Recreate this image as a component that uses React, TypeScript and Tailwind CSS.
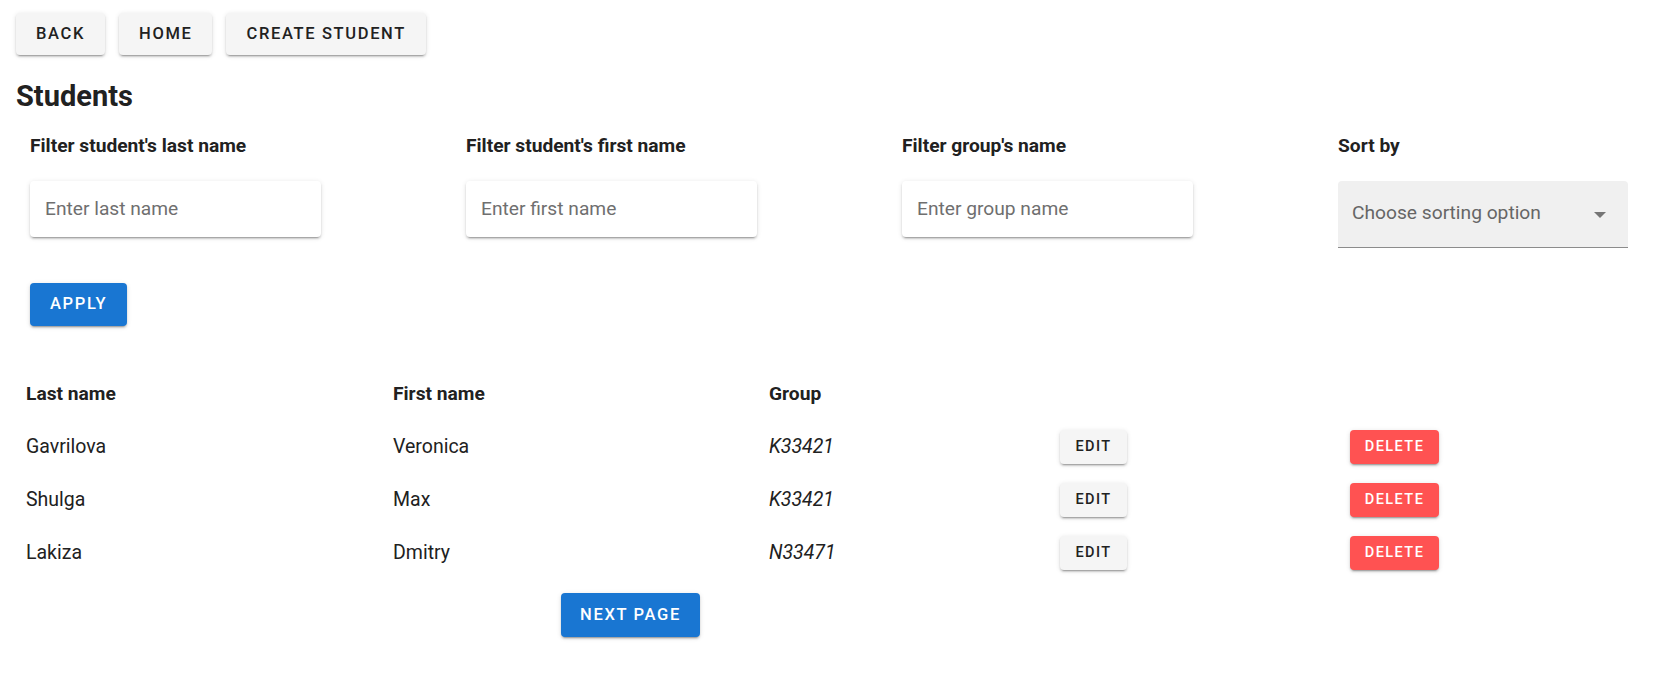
import React from "react";

const shadow =
  "shadow-[0px_3px_1px_-2px_rgba(0,0,0,0.2),0px_2px_2px_0px_rgba(0,0,0,0.14),0px_1px_5px_0px_rgba(0,0,0,0.12)]";

function GreyButton({ children }: { children: React.ReactNode }) {
  return (
    <button
      className={`h-[42px] px-[20px] rounded-[4px] bg-[#f5f5f5] text-[#212121] text-[16.5px] font-medium tracking-[0.1em] uppercase ${shadow}`}
    >
      {children}
    </button>
  );
}

function Field({ label, placeholder }: { label: string; placeholder: string }) {
  return (
    <div className="flex flex-col">
      <div className="text-[19.2px] font-bold text-[#212121] leading-[24px] h-[24px]">{label}</div>
      <div
        className={`mt-[23px] w-[291px] h-[56px] rounded-[4px] bg-white flex items-center px-[15px] text-[19.2px] text-[#6f6f6f] ${shadow}`}
      >
        {placeholder}
      </div>
    </div>
  );
}

const rows = [
  { last: "Gavrilova", first: "Veronica", group: "K33421" },
  { last: "Shulga", first: "Max", group: "K33421" },
  { last: "Lakiza", first: "Dmitry", group: "N33471" },
];

export default function App() {
  return (
    <div
      className="w-[1676px] h-[674px] bg-white text-[#212121] px-[16px] pt-[13px]"
      style={{ fontFamily: "Roboto, 'Liberation Sans', sans-serif" }}
    >
      <div className="flex gap-[14px]">
        <GreyButton>Back</GreyButton>
        <GreyButton>Home</GreyButton>
        <GreyButton>Create student</GreyButton>
      </div>

      <h1 className="mt-[24px] text-[29px] font-bold leading-[34px]">Students</h1>

      <div className="ml-[14px] mt-[21px] grid grid-cols-[436px_436px_436px_1fr]">
        <Field label="Filter student's last name" placeholder="Enter last name" />
        <Field label="Filter student's first name" placeholder="Enter first name" />
        <Field label="Filter group's name" placeholder="Enter group name" />
        <div className="flex flex-col">
          <div className="text-[19.2px] font-bold leading-[24px] h-[24px]">Sort by</div>
          <div className="mt-[23px] w-[290px] h-[67px] rounded-t-[4px] bg-[#f0f0f0] border-b border-[#8c8c8c] flex items-center pl-[14px] pr-[22px] text-[19.2px] text-[#666666]">
            <span className="flex-1 -mt-[1px]">Choose sorting option</span>
            <svg width="12" height="6" viewBox="0 0 10 5" className="mt-[1px]">
              <path d="M0 0 L5 5 L10 0 Z" fill="#757575" />
            </svg>
          </div>
        </div>

        <div className="mt-[35px] col-span-4">
          <button
            className={`h-[43px] px-[20px] rounded-[4px] bg-[#1976d2] text-white text-[16.5px] font-medium tracking-[0.1em] ${shadow}`}
          >
            APPLY
          </button>
        </div>
      </div>

      <div className="ml-[10px] mt-[43px] grid grid-cols-[367px_376px_291px_290px_auto] text-[19.5px]">
        <div className="h-[51px] flex items-center font-bold text-[19.2px]">Last name</div>
        <div className="h-[51px] flex items-center font-bold text-[19.2px]">First name</div>
        <div className="h-[51px] flex items-center font-bold text-[19.2px]">Group</div>
        <div className="h-[51px]" />
        <div className="h-[51px]" />
        {rows.map((r, i) => (
          <React.Fragment key={i}>
            <div className="h-[53px] flex items-center">{r.last}</div>
            <div className="h-[53px] flex items-center">{r.first}</div>
            <div className="h-[53px] flex items-center italic">{r.group}</div>
            <div className="h-[53px] flex items-center">
              <button
                className={`h-[34px] w-[67px] rounded-[4px] bg-[#f5f5f5] text-[#212121] text-[14.5px] font-medium tracking-[0.1em] ${shadow}`}
              >
                EDIT
              </button>
            </div>
            <div className="h-[53px] flex items-center">
              <button
                className={`h-[34px] w-[89px] rounded-[4px] bg-[#ff5252] text-white text-[14.5px] font-medium tracking-[0.1em] ${shadow}`}
              >
                DELETE
              </button>
            </div>
          </React.Fragment>
        ))}
      </div>

      <div className="ml-[545px] mt-[14px]">
        <button
          className={`h-[44px] w-[139px] rounded-[4px] bg-[#1976d2] text-white text-[16.5px] font-medium tracking-[0.1em] ${shadow}`}
        >
          NEXT PAGE
        </button>
      </div>
    </div>
  );
}
